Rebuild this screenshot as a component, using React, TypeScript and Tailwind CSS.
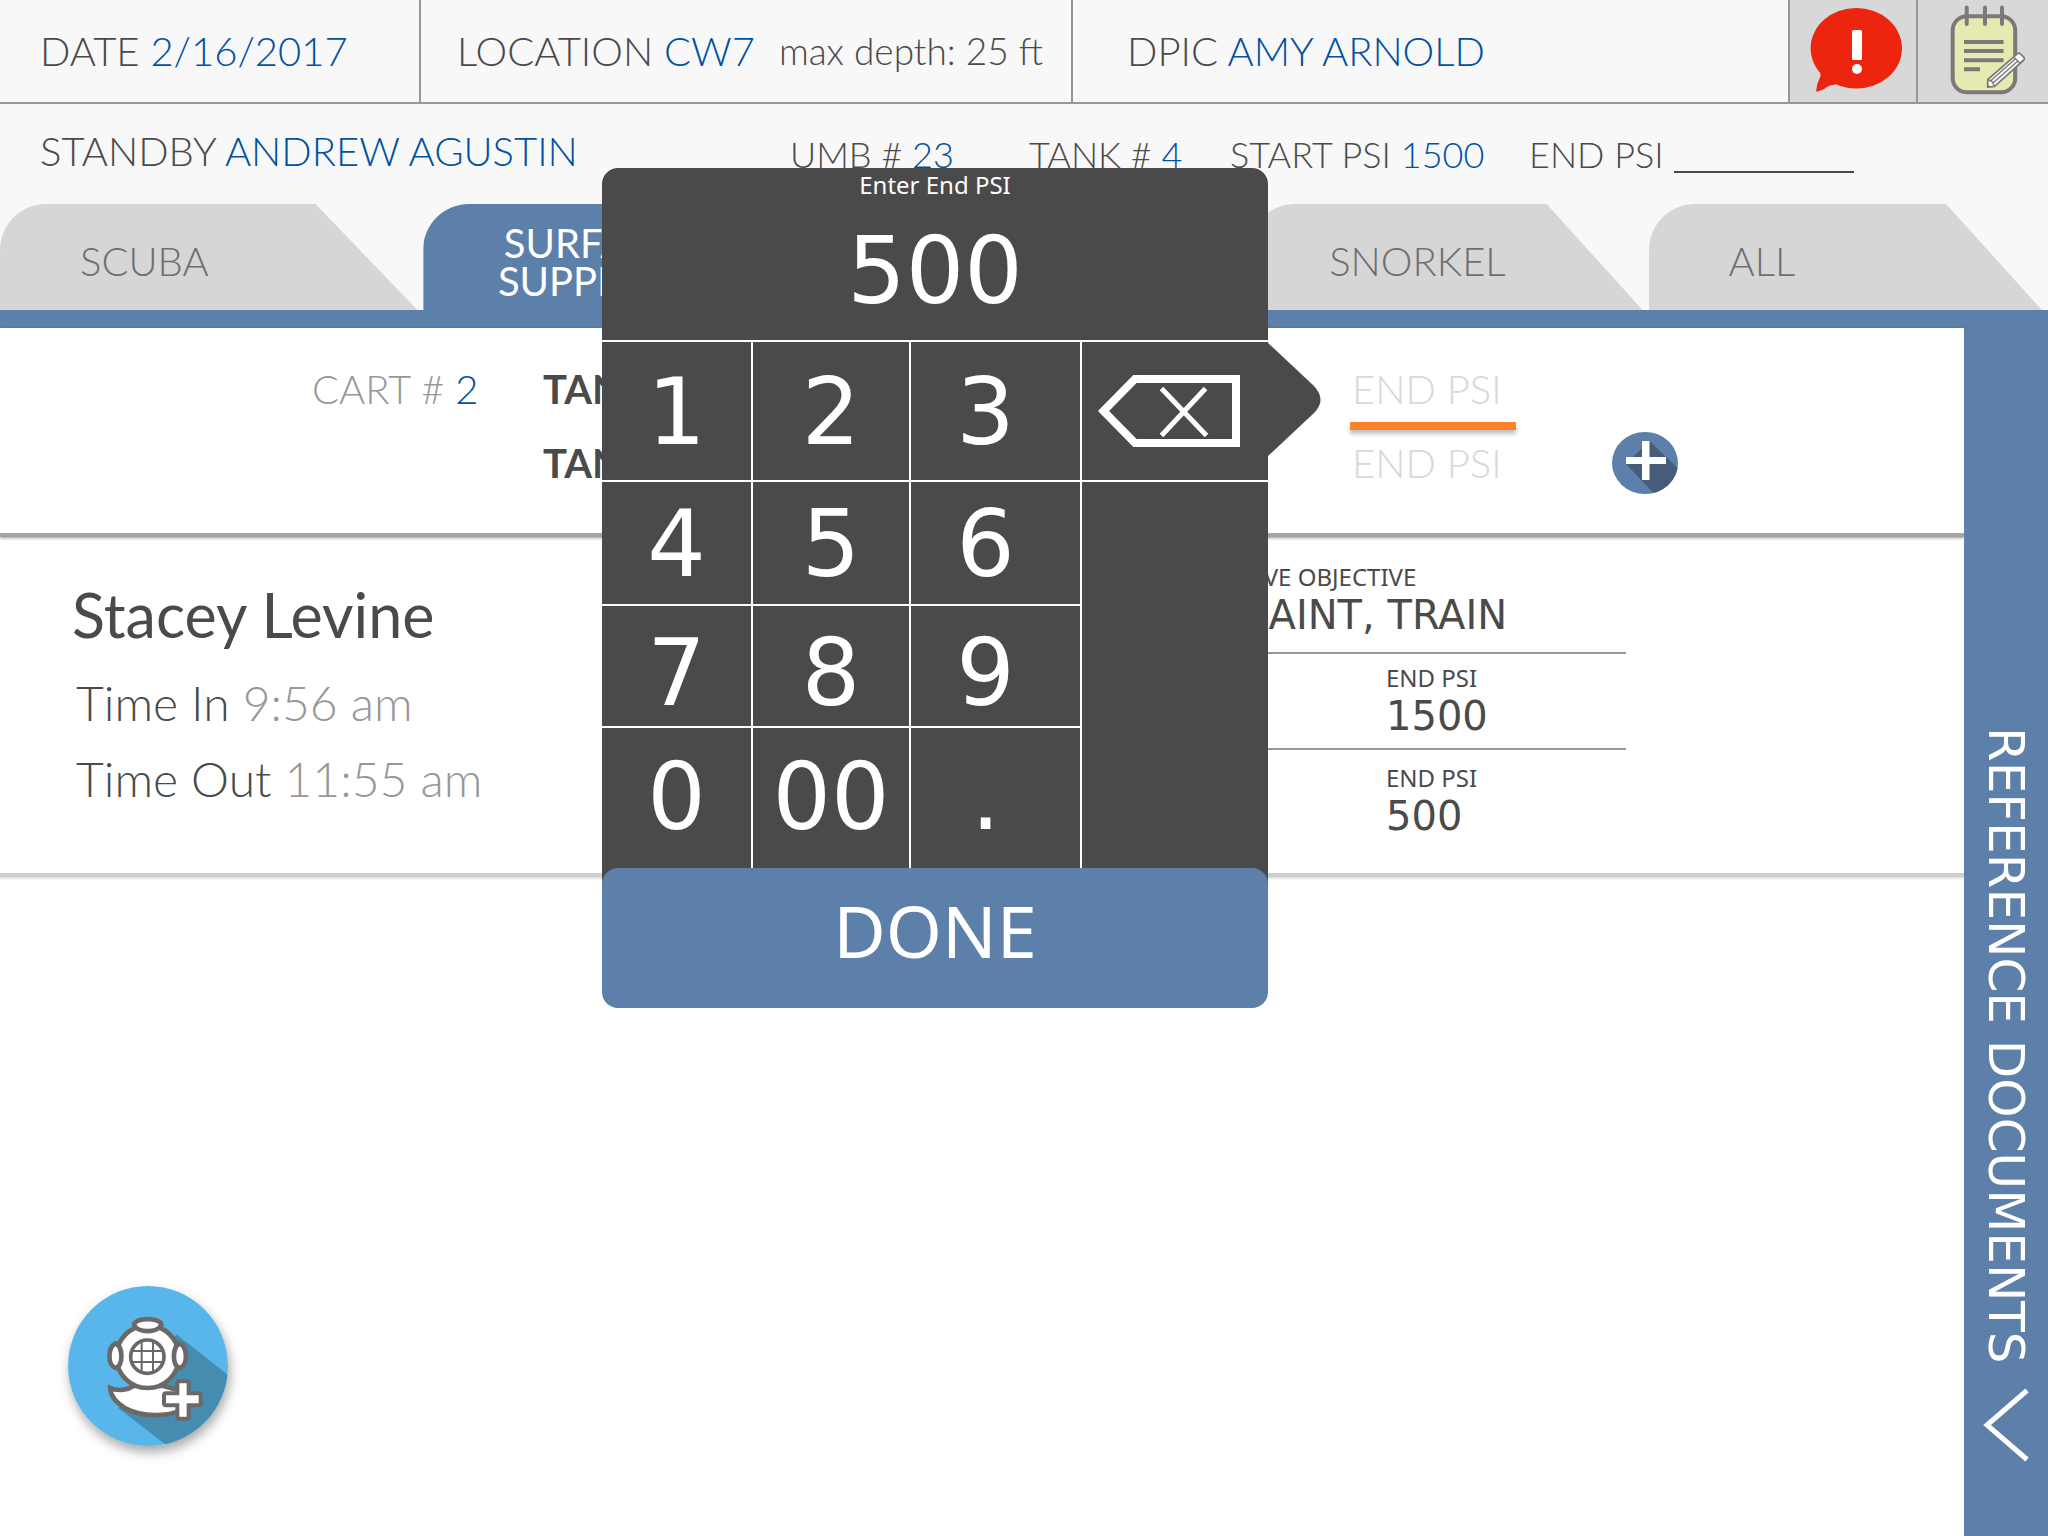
import React from "react";

const LUCIDA = "font-['Noto_Sans',sans-serif] font-normal";
const DIGITS = "font-['DejaVu_Sans',sans-serif] font-normal";

function AlertIcon() {
  return (
    <svg viewBox="30 5 92 90" className="h-[90px] w-[92px]" aria-hidden="true">
      <ellipse cx="76.3" cy="48.3" rx="45.7" ry="40.3" fill="#ed240e" />
      <path d="M38 68 Q41 73 40.5 76 Q36.5 84 36 91.8 Q43 90.5 46 87.5 Q50 85 54 84.8 L62 82 Z" fill="#ed240e" />
      <rect x="72" y="30" width="10" height="30" rx="1.5" fill="#fff" />
      <circle cx="77" cy="69" r="5" fill="#fff" />
    </svg>
  );
}

function NotepadIcon() {
  return (
    <svg viewBox="170 4 78 92" className="h-[92px] w-[78px]" aria-hidden="true">
      <rect x="173.7" y="16.3" width="62.5" height="76" rx="14" fill="#e6e9b0" stroke="#7b7979" strokeWidth="4" />
      <g stroke="#7b7979" strokeWidth="4" fill="none">
        <path strokeLinecap="round" d="M187.7 7.5V24M206 7.5V24M223 7.5V24" />
        <path d="M185 42h39.5M185 51h39.5M185 60.3h39.5M185 69.3h16" />
      </g>
      <path
        d="M208.6 87.2 L208.8 79.5 L238.5 53.6 Q240 52.6 241.5 54 L245 57.3 Q246 58.8 244.8 60 L215.6 86.4 Z"
        fill="#fff"
        stroke="#7b7979"
        strokeWidth="1.7"
        strokeLinejoin="round"
      />
      <path d="M208.8 79.5 L213 81.5 L215.6 86.4 M211 81.3 L236.8 58.5 M213.5 83.5 L239 61 M234.5 57 L241.3 63.3" fill="none" stroke="#7b7979" strokeWidth="1.4" />
      <path d="M208.6 87.2 L208.7 84.3 L211.5 87 Z" fill="#7b7979" />
    </svg>
  );
}

function BackspaceIcon() {
  return (
    <svg viewBox="0 0 142 72" className="h-[72px] w-[142px]" aria-hidden="true">
      <path d="M5.5 36 L37 4 H138 V68 H37 Z" fill="none" stroke="#fff" strokeWidth="8" />
      <path d="M63.5 13.5 L108.5 60.5 M107.5 13.5 L63.5 60.5" stroke="#fff" strokeWidth="5" />
    </svg>
  );
}

function AddIcon() {
  return (
    <svg viewBox="22 22 66 62" className="h-[62px] w-[66px]" aria-hidden="true">
      <defs>
        <clipPath id="add-disc">
          <ellipse cx="55" cy="53" rx="33" ry="31" />
        </clipPath>
      </defs>
      <ellipse cx="55" cy="53" rx="33" ry="31" fill="#5d80aa" />
      <path d="M59.5 31 L96 66 L72 92 L36 54 Z" fill="#465d7a" clipPath="url(#add-disc)" />
      <path d="M52 31h7.500v16h16.500v7h-16.500v16h-7.500v-16h-16v-7h16z" fill="#fff" />
    </svg>
  );
}

function DiverIcon() {
  return (
    <svg viewBox="0 0 480 480" className="size-40" aria-hidden="true">
      <defs>
        <clipPath id="diver-disc">
          <circle cx="240" cy="240" r="240" />
        </clipPath>
      </defs>
      <circle cx="240" cy="240" r="240" fill="#58b6ea" />
      <path d="M325 145 L490 275 L480 480 L296 478 L150 366 L250 300 Z" fill="#448cb0" clipPath="url(#diver-disc)" />
      <g stroke="#6d6868" strokeWidth="14" fill="#fff" strokeLinejoin="miter">
        <path d="M127 306 C152 318 182 310 196 300 L286 300 L350 318 L340 372 C300 392 222 394 174 368 C144 350 127 330 127 306 Z" />
        <circle cx="239" cy="212" r="94" />
        <path d="M198 115 C206 94 272 94 280 115 C272 142 206 142 198 115 Z" />
        <path d="M143 172 C166 184 166 238 143 246 C118 238 118 184 143 172 Z" />
        <path d="M335 172 C360 184 360 238 335 246 C312 238 312 184 335 172 Z" />
        <circle cx="238" cy="212" r="50" strokeWidth="11" />
      </g>
      <path d="M221 166V258M255 166V258M192 195H284M192 228H284" stroke="#6d6868" strokeWidth="6" fill="none" />
      <path
        d="M334 292h22v36h36v24h-36v40h-22v-40h-40v-24h40z"
        fill="none"
        stroke="#6d6868"
        strokeWidth="24"
        strokeLinejoin="round"
      />
      <path d="M334 292h22v36h36v24h-36v40h-22v-40h-40v-24h40z" fill="#fff" />
    </svg>
  );
}

function Tab({ children, active = false }: { children: React.ReactNode; active?: boolean }) {
  return (
    <button
      role="tab"
      aria-selected={active}
      className={
        "flex h-full items-center rounded-tl-[46px] text-[40px] leading-[38px] [clip-path:polygon(0_0,75.6%_0,100%_100%,0_100%)] " +
        (active
          ? "justify-center bg-[#5d80aa] pt-2.5 pr-[84px] text-center font-normal text-white"
          : "bg-[#d6d6d6] pt-2 pl-20 text-left font-light text-[#6f6f6f]")
      }
    >
      {children}
    </button>
  );
}

function Field({ label, value }: { label: string; value: string }) {
  return (
    <span className="whitespace-nowrap">
      {label} <span className="text-[#0051a3]">{value}</span>
    </span>
  );
}

const keyRows = [
  { keys: ["1", "2", "3"], pad: "pt-1" },
  { keys: ["4", "5", "6"], pad: "pt-1" },
  { keys: ["7", "8", "9"], pad: "pt-4" },
  { keys: ["0", "00", "."], pad: "pt-0" },
];

function Keypad() {
  return (
    <div role="dialog" aria-label="Enter End PSI" className="absolute top-[168px] left-[602px] w-[666px] text-white">
      <svg viewBox="0 0 54 116" className="absolute top-[174px] left-[665px] h-[116px] w-[54px]" aria-hidden="true">
        <path d="M0 0 L47 44 Q60 58 47 71 L0 115 Z" fill="#4a4a4a" />
      </svg>
      <div className="rounded-t-2xl bg-[#4a4a4a] pb-4">
        <label htmlFor="end-psi-value" className={`${LUCIDA} block text-center text-2xl leading-[34px]`}>
          Enter End PSI
        </label>
        <input
          id="end-psi-value"
          defaultValue="500"
          className={`${DIGITS} mt-1.5 mb-1 block h-32 w-full bg-transparent text-center text-[92px] leading-[128px] outline-none`}
        />
        <div className="grid grid-cols-[149fr_158fr_171fr_188fr] grid-rows-[140px_124px_122px_142px]">
          {keyRows.map((row, r) =>
            row.keys.map((key, c) => (
              <button
                key={key}
                className={`${DIGITS} ${row.pad} border-t-2 border-white text-center text-[92px] leading-none ${c > 0 ? "border-l-2" : ""} ${c === 2 ? "pr-5" : ""} ${c === 0 ? "col-start-1" : ""} ${r === 0 ? "row-start-1" : ""}`}
              >
                {key}
              </button>
            )),
          )}
          <button
            aria-label="Backspace"
            className="col-start-4 row-start-1 flex items-center border-t-2 border-l-2 border-white pl-4"
          >
            <BackspaceIcon />
          </button>
          <div className="col-start-4 row-span-3 row-start-2 border-t-2 border-l-2 border-white" />
        </div>
      </div>
      <button
        className={`${LUCIDA} relative -mt-4 block h-[140px] w-full rounded-2xl bg-[#5d80aa] pb-4 text-center text-[72px] leading-none`}
      >
        DONE
      </button>
    </div>
  );
}

export default function App() {
  return (
    <div className="relative flex min-h-screen flex-col overflow-hidden bg-white font-['Lato',sans-serif] text-[40px] leading-[48px] font-light text-[#4a4a4a]">
      <header className="bg-[#f8f8f8]">
        <div className="grid h-[104px] grid-cols-[419fr_652fr_717fr_128fr_132fr] border-b-2 border-[#979797]">
          <div className="flex items-center pl-10">
            <Field label="DATE" value="2/16/2017" />
          </div>
          <div className="flex items-center gap-6 border-l-2 border-[#979797] pl-9">
            <Field label="LOCATION" value="CW7" />
            <span className="text-[37px] whitespace-nowrap">max depth: 25 ft</span>
          </div>
          <div className="flex items-center border-l-2 border-[#979797] pl-[54px]">
            <Field label="DPIC" value="AMY ARNOLD" />
          </div>
          <button aria-label="Alerts" className="flex items-center justify-center border-l-2 border-[#979797] bg-[#d8d8d8] pb-0.5 pl-1.5">
            <AlertIcon />
          </button>
          <button aria-label="Notes" className="flex items-center justify-center border-l-2 border-[#979797] bg-[#d8d8d8] pb-0.5 pl-2.5">
            <NotepadIcon />
          </button>
        </div>

        <div className="grid h-[100px] grid-cols-[790fr_239fr_201fr_299fr_519fr] items-center text-4xl">
          <div className="pb-1.5 pl-10 text-[40px]">
            <Field label="STANDBY" value="ANDREW AGUSTIN" />
          </div>
          <Field label="UMB #" value="23" />
          <Field label="TANK #" value="4" />
          <Field label="START PSI" value="1500" />
          <label className="flex items-center gap-2.5 whitespace-nowrap">
            END PSI
            <input className="h-[38px] w-[180px] border-b-2 border-[#4a4a4a] bg-transparent outline-none" />
          </label>
        </div>

        <div
          role="tablist"
          className="grid h-[106px] grid-cols-[417fr_417fr_396fr_393fr_393fr] gap-x-1.5 pr-1.5"
        >
          <Tab>SCUBA</Tab>
          <Tab active>
            SURFACE
            <br />
            SUPPLIED
          </Tab>
          <div className="col-start-4 grid">
            <Tab>SNORKEL</Tab>
          </div>
          <Tab>ALL</Tab>
        </div>
        <div className="h-[18px] bg-[#5d80aa]" />
      </header>

      <div className="flex flex-1">
        <main className="flex min-w-0 flex-1 flex-col">
          <section className="grid grid-cols-[312fr_231fr_807fr_262fr_352fr] grid-rows-[74px_74px] items-center border-b-4 border-[#a6a6a6] pt-6 pb-[33px] shadow-[0_1px_3px_rgba(0,0,0,0.4)]">
            <div className="col-start-2 text-[#979797]">
              <Field label="CART #" value="2" />
            </div>
            <b className="font-bold">TANK</b>
            <div className="w-[166px] self-start">
              <input
                aria-label="Tank 1 end PSI"
                placeholder="END PSI"
                className="block h-[70px] w-full bg-transparent pt-1 pl-0.5 outline-none placeholder:text-[#d8d8d8] placeholder:opacity-100"
              />
              <div className="-mb-1 h-2 bg-[#fb8228] shadow-[0_4px_4px_rgba(0,0,0,0.25)]" />
            </div>
            <b className="col-start-3 row-start-2 font-bold">TANK</b>
            <input
              aria-label="Tank 2 end PSI"
              placeholder="END PSI"
              className="col-start-4 row-start-2 h-[74px] w-[166px] bg-transparent pl-0.5 outline-none placeholder:text-[#d8d8d8] placeholder:opacity-100"
            />
            <button aria-label="Add tank" className="col-start-5 row-start-2 justify-self-start">
              <AddIcon />
            </button>
          </section>

          <section className="flex justify-between border-b-4 border-[#cfcfcf] shadow-[0_1px_3px_rgba(0,0,0,0.2)]">
            <div className="pt-10 pb-14 pl-[72px] text-5xl leading-[76px]">
              <h2 className="mb-3 text-[61px] font-normal">Stacey Levine</h2>
              <p className="pl-1">
                Time In <span className="text-[#979797]">9:56 am</span>
              </p>
              <p className="pl-1">
                Time Out <span className="text-[#979797]">11:55 am</span>
              </p>
            </div>
            <dl className={`${LUCIDA} mr-[338px] w-[626px] pt-6 text-[40px] leading-[44px]`}>
              <div className="border-b-2 border-[#979797] pb-[15px] pl-[234px]">
                <dt className="pl-1 text-2xl leading-8">DIVE OBJECTIVE</dt>
                <dd className={DIGITS}>MAINT, TRAIN</dd>
              </div>
              <div className="border-b-2 border-[#979797] pt-2 pb-2.5 pl-[386px]">
                <dt className="text-2xl leading-8">END PSI</dt>
                <dd className={DIGITS}>1500</dd>
              </div>
              <div className="pt-3 pl-[386px]">
                <dt className="text-2xl leading-8">END PSI</dt>
                <dd className={DIGITS}>500</dd>
              </div>
            </dl>
          </section>

          <button aria-label="Add diver" className="mt-auto mb-[90px] ml-[68px] self-start rounded-full shadow-[2px_6px_12px_rgba(0,0,0,0.35)]">
            <DiverIcon />
          </button>
        </main>

        <aside className="flex w-[84px] flex-col justify-end bg-[#5d80aa] pb-[74px] text-white">
          <button className={`${DIGITS} flex flex-col items-center gap-6 text-[50px] leading-[64px]`}>
            <span className="whitespace-nowrap [writing-mode:vertical-rl]">REFERENCE DOCUMENTS</span>
            <svg viewBox="0 0 46 74" className="h-[74px] w-[46px]" aria-hidden="true">
              <path d="M44 2.500 L4 37 L44 71.500" fill="none" stroke="#fff" strokeWidth="5" />
            </svg>
          </button>
        </aside>
      </div>

      <Keypad />
    </div>
  );
}
